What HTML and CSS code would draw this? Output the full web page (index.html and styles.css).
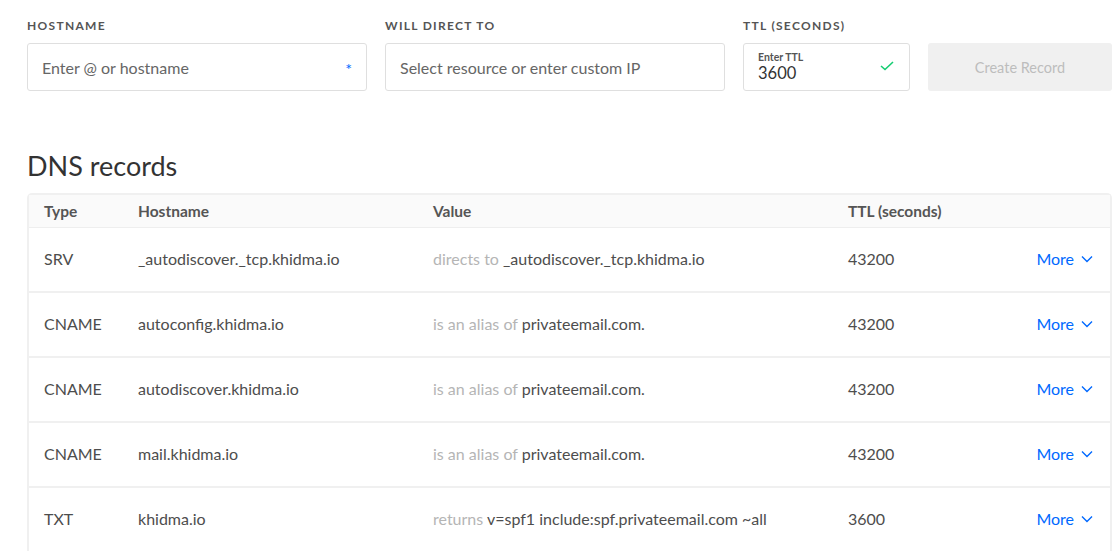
FILE: index.html
```html
<!DOCTYPE html>
<html>
<head>
<meta charset="utf-8">
<link rel="stylesheet" href="styles.css">
</head>
<body>
<div class="page">
  <form class="create">
    <div class="field f-host">
      <label class="lbl">Hostname</label>
      <div class="box">
        <span class="ph">Enter @ or hostname</span>
        <span class="req">*</span>
      </div>
    </div>
    <div class="field f-dir">
      <label class="lbl">Will direct to</label>
      <div class="box">
        <span class="ph">Select resource or enter custom IP</span>
      </div>
    </div>
    <div class="field f-ttl">
      <label class="lbl">TTL (seconds)</label>
      <div class="box ttl-box">
        <div class="ttl-text">
          <span class="mini">Enter TTL</span>
          <span class="val">3600</span>
        </div>
        <svg class="check" width="14" height="10" viewBox="0 0 14 10"><path d="M1 5 L5 8.5 L13 1" fill="none" stroke="#15cd72" stroke-width="1.6"/></svg>
      </div>
    </div>
    <div class="field f-btn">
      <span class="lbl">&nbsp;</span>
      <button type="button" class="btn">Create Record</button>
    </div>
  </form>

  <h2 class="title">DNS records</h2>

  <div class="table">
    <div class="row head">
      <div class="c type">Type</div>
      <div class="c host">Hostname</div>
      <div class="c value">Value</div>
      <div class="c ttl">TTL (seconds)</div>
      <div class="c more"></div>
    </div>
    <div class="row">
      <div class="c type">SRV</div>
      <div class="c host">_autodiscover._tcp.khidma.io</div>
      <div class="c value"><span class="muted">directs to</span> _autodiscover._tcp.khidma.io</div>
      <div class="c ttl">43200</div>
      <div class="c more"><a class="more-link">More <svg width="12" height="8" viewBox="0 0 12 8"><path d="M1 1.5 L6 6.5 L11 1.5" fill="none" stroke="#0069ff" stroke-width="1.4"/></svg></a></div>
    </div>
    <div class="row">
      <div class="c type">CNAME</div>
      <div class="c host">autoconfig.khidma.io</div>
      <div class="c value"><span class="muted">is an alias of</span> privateemail.com.</div>
      <div class="c ttl">43200</div>
      <div class="c more"><a class="more-link">More <svg width="12" height="8" viewBox="0 0 12 8"><path d="M1 1.5 L6 6.5 L11 1.5" fill="none" stroke="#0069ff" stroke-width="1.4"/></svg></a></div>
    </div>
    <div class="row">
      <div class="c type">CNAME</div>
      <div class="c host">autodiscover.khidma.io</div>
      <div class="c value"><span class="muted">is an alias of</span> privateemail.com.</div>
      <div class="c ttl">43200</div>
      <div class="c more"><a class="more-link">More <svg width="12" height="8" viewBox="0 0 12 8"><path d="M1 1.5 L6 6.5 L11 1.5" fill="none" stroke="#0069ff" stroke-width="1.4"/></svg></a></div>
    </div>
    <div class="row">
      <div class="c type">CNAME</div>
      <div class="c host">mail.khidma.io</div>
      <div class="c value"><span class="muted">is an alias of</span> privateemail.com.</div>
      <div class="c ttl">43200</div>
      <div class="c more"><a class="more-link">More <svg width="12" height="8" viewBox="0 0 12 8"><path d="M1 1.5 L6 6.5 L11 1.5" fill="none" stroke="#0069ff" stroke-width="1.4"/></svg></a></div>
    </div>
    <div class="row">
      <div class="c type">TXT</div>
      <div class="c host">khidma.io</div>
      <div class="c value"><span class="muted">returns</span> v=spf1 include:spf.privateemail.com ~all</div>
      <div class="c ttl">3600</div>
      <div class="c more"><a class="more-link">More <svg width="12" height="8" viewBox="0 0 12 8"><path d="M1 1.5 L6 6.5 L11 1.5" fill="none" stroke="#0069ff" stroke-width="1.4"/></svg></a></div>
    </div>
  </div>
</div>
</body>
</html>
```

FILE: styles.css
```css
* { box-sizing: border-box; }
html, body { margin: 0; padding: 0; background: #fff; }
body {
  font-family: "Lato", "Liberation Sans", sans-serif;
  color: #4d4d4d;
  font-size: 16px;
  overflow: hidden;
}
.page { padding: 18px 0 0 27px; }

.create { display: flex; gap: 18px; align-items: flex-start; }
.field { display: flex; flex-direction: column; flex-shrink: 0; }
.f-host, .f-dir { width: 340px; }
.f-ttl { width: 167px; }
.f-btn { width: 184px; }
.lbl {
  display: block;
  font-size: 12px;
  font-weight: 700;
  letter-spacing: 1.3px;
  text-transform: uppercase;
  color: #555;
  line-height: 16px;
  margin-bottom: 9px;
}
.box {
  height: 48px;
  border: 1px solid #dfdfdf;
  border-radius: 3px;
  display: flex;
  align-items: center;
  justify-content: space-between;
  padding: 0 14px;
}
.ph { color: #666; font-size: 16px; }
.req { color: #0069ff; font-size: 16px; margin-top: 2px; }
.ttl-text { display: flex; flex-direction: column; }
.mini { font-size: 10.5px; font-weight: 700; color: #555; line-height: 12px; }
.val { font-size: 16.5px; color: #333; line-height: 20px; }
.check { margin-right: 1px; margin-top: -2px; }
.btn {
  height: 48px;
  width: 100%;
  border: none;
  border-radius: 3px;
  background: #f0f0f0;
  color: #bdbdbd;
  font-family: inherit;
  font-size: 14.5px;
  padding-top: 2px;
}

.title {
  font-size: 27px;
  font-weight: 400;
  color: #333;
  margin: 60px 0 12px;
  line-height: 30px;
}

.table {
  border: 2px solid #f0f0f0;
  border-bottom: none;
  border-radius: 5px 5px 0 0;
  width: 1085px;
}
.row {
  display: flex;
  align-items: center;
  height: 65px;
  padding-bottom: 2px;
  border-bottom: 2px solid #f0f0f0;
}
.row.head {
  height: 33px;
  padding-bottom: 0;
  border-bottom: 1px solid #eee;
  background: #fafafa;
  font-weight: 700;
  color: #555;
  font-size: 15.5px;
}
.c { white-space: nowrap; }
.type { width: 109px; padding-left: 15px; }
.host { width: 295px; }
.value { width: 415px; }
.ttl { width: 150px; }
.more { flex: 1; text-align: right; padding-right: 17px; }
.muted { color: #b5b5b5; }
.more-link { color: #0069ff; display: inline-flex; align-items: center; gap: 7px; }
.more-link svg { margin-top: 1px; }
```
